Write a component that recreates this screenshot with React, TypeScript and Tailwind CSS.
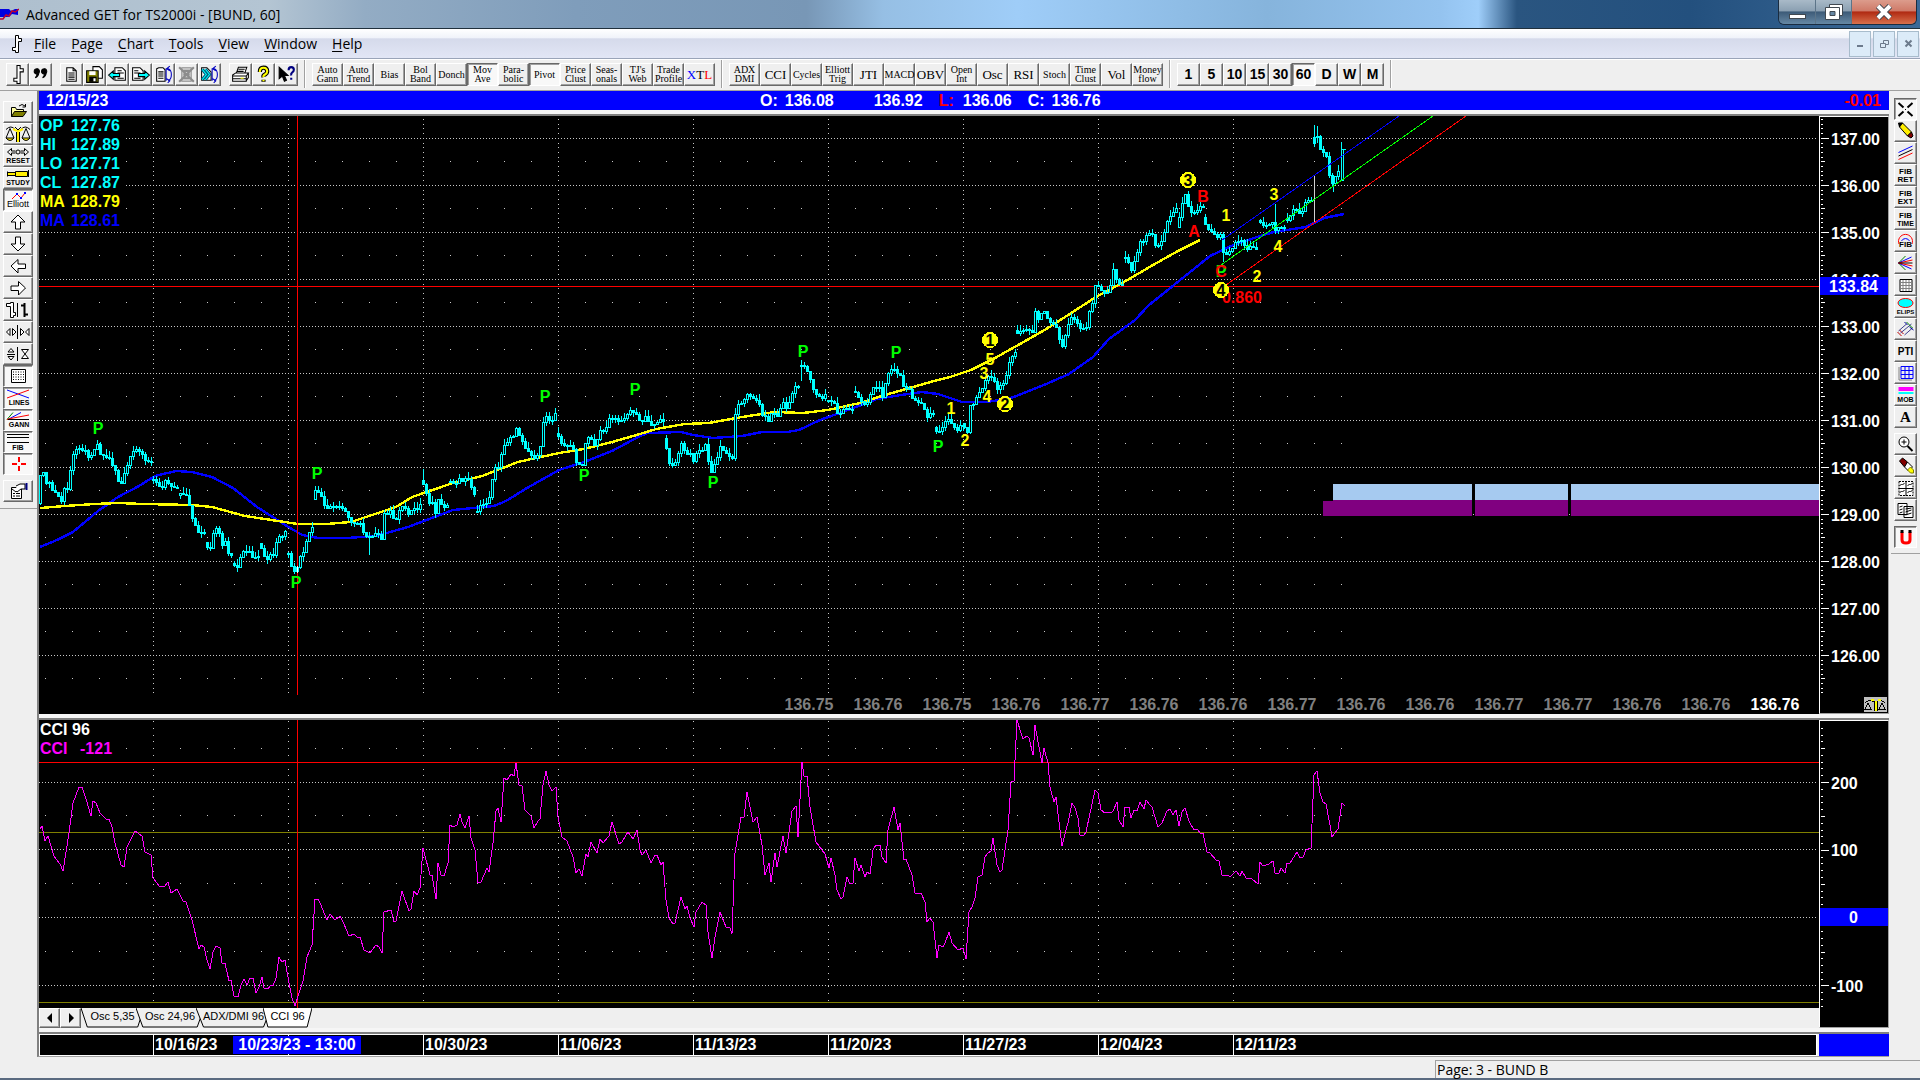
import React from "react";

type Point = [number, number];

const parsePoints = (raw: string): Point[] =>
  raw
    .trim()
    .split(/\s+/)
    .map((pair) => pair.split(",").map(Number) as Point);

// one string per session group, gaps are left between them
const priceSegments = [
  "40,503 42,477 45,473 48,483 52,480 55,492 58,495 63,501 66,487 70,487 73,465 76,450 82,446 86,450 91,460 95,450 99,442 102,456 112,457 116,468 120,482 124,483 127,467 133,456 137,448 144,452 146,462 151,462",
  "153,479 159,482 162,487 169,480 171,487 178,485",
  "180,495 188,495 192,507 195,520 199,533 205,531",
  "207,542 212,550 216,528 220,528 224,543 227,543 229,553 232,555",
  "234,563 240,565 244,552 252,550 256,560 259,557",
  "261,543 267,557 276,556 279,535 283,535 286,533",
  "288,553 291,555 294,572 298,567 301,560 305,553 309,537 313,525",
  "315,499 317,492 322,493 325,503 331,508 343,504 347,513 352,522 361,522 365,533 369,537 374,534 380,535 383,539 385,512 392,512 394,519 398,519 402,505 405,503 409,517 414,508 421,506",
  "423,480 428,493 430,502 434,500 437,515 440,500 445,507 448,503",
  "450,482 457,485 461,477 467,480 471,480 475,493",
  "477,511 484,505 490,502 493,483 495,470 501,467 504,447 509,440 515,437 518,428 524,439 527,450 536,457 542,448 544,427 547,415 552,420 556,415",
  "558,433 563,443 569,444 575,450 577,462 584,463 586,447 591,436 597,446 600,433 607,431 612,413 619,423 625,419 629,412 637,413 642,420 646,417 654,426 658,419 664,422",
  "666,438 671,462 677,464 683,443 687,451 691,453 695,462 699,450 707,446 710,462 713,472 718,457 722,448 728,453 735,457 736,420 740,405 745,402 748,390 752,398 760,400 764,413 770,422 774,410 780,415 785,403 789,409 793,392 798,387",
  "801,365 808,365 811,378 816,393 825,396",
  "828,400 836,402 841,417 846,408 852,408",
  "855,391 860,398 866,403 871,398 875,388 881,386 885,398 888,378 894,367 901,372 904,387 911,388 916,402 924,403 929,415 934,415",
  "936,427 939,433 943,426 950,420 958,428 963,427",
  "964,423 969,430 971,408 975,405 980,392 985,385 991,375 995,378 999,387 1004,387 1009,372 1012,355 1015,354",
  "1017,330 1022,333 1030,328 1034,330 1037,313 1041,322 1044,308 1048,312 1051,323 1058,327 1061,338 1065,346 1068,333 1072,317 1078,318 1082,330 1089,327 1092,302 1096,300 1097,287 1101,287 1105,293 1112,287 1115,270 1119,282 1123,283",
  "1125,257 1130,263 1133,270 1137,257 1141,243 1146,242 1149,232 1154,232 1157,247 1161,245 1165,237 1168,220 1173,217 1177,208",
  "1179,227 1182,210 1185,197 1189,195 1190,207 1194,214 1198,208 1203,208",
  "1205,217 1208,230 1212,230 1219,235 1222,236 1223,253 1228,254 1233,247 1239,242 1244,240 1248,247 1258,249",
  "1260,220 1264,227 1271,223 1274,220 1277,232 1281,227 1285,226",
  "1287,218 1292,217 1296,207 1301,212 1305,208 1308,202 1312,200",
  "1314,143 1317,133 1320,134 1321,150 1328,156 1330,170 1333,182 1337,178 1340,172",
].map(parsePoints);

const slowAverage =
  "40,508 65,506 94,504 118,503 143,504 192,505 212,507 245,516 278,521 298,524 327,524 351,522 363,518 396,507 412,497 453,483 482,476 518,462 559,453 584,449 612,442 640,434 656,429 685,424 709,423 742,417 775,412 803,413 828,410 860,403 885,395 934,381 950,377 971,370 995,358 1020,344 1048,328 1096,297 1124,282 1153,265 1178,251 1200,240";

const fastAverage =
  "40,547 57,540 73,532 98,511 118,497 139,486 155,476 176,471 192,472 212,477 233,488 257,507 282,523 302,535 318,538 347,538 376,536 408,527 453,510 494,506 506,501 527,488 559,470 584,462 612,451 640,436 648,433 681,432 693,435 713,438 742,436 762,432 787,432 799,430 820,420 848,410 877,399 901,395 922,392 938,394 962,402 987,402 1011,398 1044,385 1069,374 1093,357 1109,339 1135,320 1149,305 1174,285 1210,256 1231,246 1260,236 1274,232 1306,227 1324,218 1344,214";

const cciLine =
  "40,829 42,826 45,841 48,836 54,856 60,864 63,871 69,833 73,803 79,787 82,787 87,802 91,816 93,801 96,803 100,813 106,819 109,819 112,827 115,843 121,865 124,867 127,847 135,831 142,836 145,852 151,855 153,878 160,887 165,886 168,882 171,893 177,889 183,901 186,902 192,920 199,949 201,945 204,947 207,960 210,969 213,952 216,946 220,948 222,963 225,963 229,981 231,980 234,996 238,997 241,985 244,979 247,985 250,978 253,978 256,993 259,987 262,977 264,988 268,989 271,985 273,986 276,978 279,957 282,962 285,960 289,983 292,998 295,1006 300,990 303,981 307,957 312,945 315,899 318,899 321,905 324,913 327,920 330,914 335,920 340,916 344,924 349,936 354,934 358,938 360,937 364,950 370,953 376,945 379,947 382,953 384,912 391,910 394,922 396,921 402,891 409,911 411,909 414,891 417,895 420,888 423,848 430,875 432,875 436,899 438,863 441,875 444,876 448,863 450,825 453,827 457,825 460,814 462,822 465,828 469,816 471,838 475,850 478,883 481,882 487,868 489,872 493,843 496,811 498,808 501,822 504,778 507,780 511,774 514,776 516,763 519,785 522,786 525,810 531,816 534,828 538,821 540,819 543,785 546,771 549,785 552,791 556,787 558,817 562,837 567,841 573,857 576,873 579,869 582,876 586,854 588,857 591,842 597,853 600,839 603,843 609,836 612,822 619,844 622,842 628,832 633,839 637,830 640,850 642,855 646,850 651,863 655,855 657,855 661,865 663,862 666,900 669,918 673,924 675,923 681,897 685,909 687,906 690,918 694,927 696,912 702,902 706,905 708,932 712,958 715,937 720,912 726,927 730,928 732,934 735,853 741,817 744,817 747,792 753,822 757,817 762,845 765,875 769,863 771,882 775,853 777,867 783,836 786,853 792,811 796,806 798,837 802,762 804,776 807,776 810,807 816,842 825,854 829,868 831,858 835,875 837,890 841,899 843,897 847,877 850,884 853,883 855,858 859,871 861,865 865,877 867,872 870,874 873,850 876,845 880,845 882,857 886,863 888,830 894,807 898,830 900,823 904,860 906,859 912,875 915,893 921,893 925,902 927,922 930,918 933,922 937,958 939,945 943,947 945,943 949,932 952,943 958,950 963,948 966,959 969,912 972,907 975,898 978,877 982,875 985,857 988,853 991,851 993,838 997,865 1000,872 1002,870 1008,830 1011,782 1014,781 1017,720 1021,733 1023,739 1027,736 1029,738 1033,755 1035,725 1039,747 1042,763 1044,748 1048,763 1050,787 1054,802 1056,797 1060,830 1062,846 1066,830 1068,823 1072,803 1075,808 1078,818 1080,835 1084,835 1086,832 1095,790 1098,793 1101,810 1105,813 1107,812 1111,813 1113,811 1117,802 1119,820 1123,827 1125,807 1129,807 1131,818 1134,810 1137,811 1140,802 1144,809 1146,800 1150,805 1152,807 1158,827 1162,823 1167,811 1170,809 1173,815 1176,810 1179,826 1182,812 1185,808 1189,821 1194,830 1197,829 1201,834 1203,833 1207,852 1210,853 1216,860 1219,861 1222,875 1228,875 1230,877 1236,871 1240,876 1242,871 1246,878 1252,879 1258,884 1260,862 1263,866 1269,864 1273,861 1275,873 1279,873 1281,868 1285,873 1287,863 1290,863 1297,852 1300,858 1303,857 1306,850 1311,848 1314,775 1317,771 1320,793 1323,802 1326,804 1330,825 1332,837 1338,829 1342,803 1345,806";

const weekLines = [153, 288, 423, 558, 693, 828, 963, 1098, 1233];
const priceLevels = [137, 136, 135, 134, 133, 132, 131, 130, 129, 128, 127, 126];
const priceY = (price: number) => 138 + (137 - price) * 47;

const pivots: Point[] = [
  [98, 434], [296, 588], [317, 479], [545, 402], [635, 395], [584, 481],
  [713, 488], [803, 357], [896, 358], [938, 452],
];

const waves: { label: string; x: number; y: number; fill: string }[] = [
  { label: "1", x: 951, y: 414, fill: "#ffff00" },
  { label: "2", x: 965, y: 446, fill: "#ffff00" },
  { label: "3", x: 984, y: 379, fill: "#ffff00" },
  { label: "4", x: 987, y: 402, fill: "#ffff00" },
  { label: "5", x: 990, y: 365, fill: "#ffff00" },
  { label: "1", x: 1226, y: 221, fill: "#ffff00" },
  { label: "2", x: 1257, y: 282, fill: "#ffff00" },
  { label: "3", x: 1274, y: 200, fill: "#ffff00" },
  { label: "4", x: 1278, y: 252, fill: "#ffff00" },
  { label: "A", x: 1194, y: 237, fill: "#ff0000" },
  { label: "B", x: 1203, y: 202, fill: "#ff0000" },
];

const circledWaves = [
  { label: "1", x: 990, y: 340 },
  { label: "2", x: 1005, y: 404 },
  { label: "3", x: 1188, y: 180 },
  { label: "4", x: 1221, y: 290 },
];

const lastPrices = [
  "136.75", "136.76", "136.75", "136.76", "136.77", "136.76", "136.76", "136.77",
  "136.76", "136.76", "136.77", "136.77", "136.76", "136.76", "136.76",
];

const readout = [
  { label: "OP", value: "127.76", fill: "#00ffff" },
  { label: "HI", value: "127.89", fill: "#00ffff" },
  { label: "LO", value: "127.71", fill: "#00ffff" },
  { label: "CL", value: "127.87", fill: "#00ffff" },
  { label: "MA", value: "128.79", fill: "#ffff00" },
  { label: "MA", value: "128.61", fill: "#0000ff" },
];

const studiesA = [
  "Auto Gann", "Auto Trend", "Bias", "Bol Band", "Donch", "Mov Ave", "Para- bolic",
  "Pivot", "Price Clust", "Seas- onals", "TJ's Web", "Trade Profile", "XTL",
];
const studiesB = [
  "ADX DMI", "CCI", "Cycles", "Elliott Trig", "JTI", "MACD", "OBV", "Open Int",
  "Osc", "RSI", "Stoch", "Time Clust", "Vol", "Money flow",
];
const bigStudies = ["CCI", "JTI", "OBV", "Osc", "RSI", "Vol", "XTL"];
const timeframes = ["1", "5", "10", "15", "30", "60", "D", "W", "M"];
const menus = ["File", "Page", "Chart", "Tools", "View", "Window", "Help"];

const interpolate = (points: Point[], x: number) => {
  for (let i = 1; i < points.length; i++) {
    const [x0, y0] = points[i - 1];
    const [x1, y1] = points[i];
    if (x <= x1) return y0 + ((y1 - y0) * (x - x0)) / (x1 - x0);
  }
  return points[points.length - 1][1];
};

const jitter = (n: number, range: number) => (n * 37 + ((n * n) % 11) * 5) % range;

const Candles: React.FC = () => {
  const bodies: React.ReactNode[] = [];
  priceSegments.forEach((segment) => {
    const last = segment[segment.length - 1][0];
    let open = segment[0][1];
    for (let x = segment[0][0]; x <= last; x += 3) {
      const close = Math.round(interpolate(segment, x + 2) + jitter(x, 5) - 2);
      const top = Math.round(Math.min(open, close));
      const height = Math.max(1, Math.abs(Math.round(close - open)));
      bodies.push(
        <g key={x}>
          <path
            d={`M${x + 0.5} ${top - jitter(x, 7)}V${top}M${x + 0.5} ${top + height}V${top + height + jitter(x + 1, 6)}`}
          />
          <rect
            x={x - 0.5}
            y={top + 0.5}
            width={2}
            height={height}
            fill={close > open ? "#00ffff" : "#000000"}
          />
        </g>
      );
      open = close;
    }
  });
  return <g stroke="#00ffff">{bodies}</g>;
};

const gridDots = (ys: number[]) => {
  const dots: string[] = [];
  for (let x = 45; x <= 1341; x += 27) {
    if (weekLines.includes(x)) continue;
    ys.forEach((y) => dots.push(`M${x} ${y + 0.5}h1`));
  }
  return dots.join("");
};

const PriceChart: React.FC = () => (
  <svg className="block h-full w-full" shapeRendering="crispEdges" role="img" aria-label="BUND 60 minute price">
    <g transform="translate(-39 -116)" fill="none" className="font-bold" fontFamily="'Liberation Sans', Arial, sans-serif" fontSize="16">
      <g stroke="#c8c8c8">
        {priceLevels.map((p) => (
          <path key={p} d={`M39 ${priceY(p) + 0.5}H1817`} strokeDasharray="1 2" />
        ))}
        {weekLines.map((x) => (
          <path key={x} d={`M${x + 0.5} 119V694`} strokeDasharray="1 3.7" />
        ))}
        <path d={gridDots(priceLevels.map((p) => priceY(p) + 23))} />
      </g>
      <rect x={39} y={116} width={86} height={115} fill="#000000" />

      <path d="M39 286.5H1820" stroke="#ff0000" />
      <path d="M1333 484h139v16h-139zM1475 484h93v16h-93zM1571 484h700v16h-700z" fill="#a6caf0" />
      <path d="M1323 501h10v-1h139v16h-149zM1475 500h93v16h-93zM1571 500h700v16h-700z" fill="#800080" />

      <polyline points={fastAverage} stroke="#0000ff" strokeWidth={2.4} />
      <polyline points={slowAverage} stroke="#ffff00" strokeWidth={2.4} />
      <Candles />
      <g stroke="#00ffff">
        <path d="M369.5 537V555M423.5 469V480M801.5 361V381M1314.5 125V143M1317.5 126V143M1275.5 204V232M1223.5 250V262M1333.5 182V192M1341.5 142V180M1340 180.5h3M1343.5 149V181M1342 149.5h4" />
      </g>
      <path d="M1314.5 175V223" stroke="#d0d0d0" />
      <path d="M1222 240L1399 116" stroke="#0000ff" />
      <path d="M1221 265L1433 116" stroke="#00ff00" />
      <path d="M1226 285L1466 116" stroke="#ff0000" />
      <path d="M297.5 116V695" stroke="#ff0000" />
      <path d="M297.5 566V573" stroke="#ffffff" />

      <g textAnchor="middle">
        {pivots.map(([x, y]) => (
          <text key={x} x={x} y={y} fill="#00ff00">P</text>
        ))}
        <text x={1221} y={277} fill="#00ff00">P</text>
        <text x={1221} y={277} fill="#ff0000">C</text>
        <text x={1242} y={303} fill="#ff0000">0.860</text>
        {waves.map((w) => (
          <text key={`${w.label}-${w.x}`} x={w.x} y={w.y} fill={w.fill}>{w.label}</text>
        ))}
        {circledWaves.map((w) => (
          <g key={w.x}>
            <circle cx={w.x} cy={w.y} r={8} fill="#ffff00" />
            <text x={w.x} y={w.y + 6} fill="#000000">{w.label}</text>
          </g>
        ))}
        {lastPrices.map((p, i) => (
          <text key={i} x={809 + i * 69} y={710} fill={i === lastPrices.length - 1 ? "#ffffff" : "#808080"}>{p}</text>
        ))}
      </g>
      {readout.map((row, i) => (
        <g key={i} fill={row.fill}>
          <text x={40} y={131 + i * 19}>{row.label}</text>
          <text x={71} y={131 + i * 19}>{row.value}</text>
        </g>
      ))}
    </g>
  </svg>
);

const CciChart: React.FC = () => (
  <svg className="block h-full w-full" shapeRendering="crispEdges" role="img" aria-label="CCI 96">
    <g transform="translate(-39 -720)" fill="none" className="font-bold" fontFamily="'Liberation Sans', Arial, sans-serif" fontSize="16">
      <g stroke="#c8c8c8">
        {[782, 849, 917, 985].map((y) => (
          <path key={y} d={`M39 ${y + 0.5}H1817`} strokeDasharray="1 2" />
        ))}
        {weekLines.map((x) => (
          <path key={x} d={`M${x + 0.5} 721V1007`} strokeDasharray="1 5.8" />
        ))}
        <path d={gridDots([748, 815, 883, 951])} />
      </g>
      <rect x={39} y={720} width={86} height={36} fill="#000000" />
      <path d="M39 832.5H1820M39 1002.5H1820" stroke="#808000" />
      <path d="M39 762.5H1820M297.5 720V1008" stroke="#ff0000" />
      <polyline points={cciLine} stroke="#ff00ff" />
      <text x={40} y={735} fill="#ffffff">CCI 96</text>
      <text x={40} y={754} fill="#ff00ff">CCI</text>
      <text x={80} y={754} fill="#ff00ff">-121</text>
    </g>
  </svg>
);

const PriceAxis: React.FC = () => {
  const ticks: string[] = [];
  for (let i = 0; i <= 122; i++) {
    const y = Math.round(119 + i * 4.7);
    const step = (i + 6) % 10;
    ticks.push(`M1821 ${y + 0.5}h${step === 0 ? 8 : step === 5 ? 4 : 2}`);
  }
  return (
    <svg className="block h-full w-full" shapeRendering="crispEdges" role="img" aria-label="Price scale">
      <g transform="translate(-1820 -117)" className="font-bold" fontFamily="'Liberation Sans', Arial, sans-serif" fontSize="16" fill="#ffffff">
        <path d={ticks.join("")} stroke="#ffffff" />
        {priceLevels.map((p) => (
          <text key={p} x={1831} y={priceY(p) + 7}>{p.toFixed(2)}</text>
        ))}
        <rect x={1820} y={277} width={70} height={18} fill="#0000ff" />
        <text x={1829} y={292}>133.84</text>
        <g transform="translate(1864 697)">
          <rect width={23} height={15} fill="#c0c0c0" />
          <path d="M1 6q5-5 10 0q5-5 10 0M4 6l-3 6h6zM18 6l-3 6h6z" fill="none" stroke="#000000" />
          <path d="M10 4v10M13 4v10" fill="none" stroke="#000000" />
          <path d="M11.500 4v10M7 3h3M14 3h3" stroke="#ffff00" strokeWidth={2} />
        </g>
      </g>
    </svg>
  );
};

const CciAxis: React.FC = () => {
  const ticks: string[] = [];
  for (let i = 0; i <= 41; i++) {
    const y = Math.round(727.8 + i * 6.78);
    const step = (i + 2) % 10;
    ticks.push(`M1821 ${y + 0.5}h${step === 0 ? 8 : step === 5 ? 4 : 2}`);
  }
  return (
    <svg className="block h-full w-full" shapeRendering="crispEdges" role="img" aria-label="CCI scale">
      <g transform="translate(-1820 -721)" className="font-bold" fontFamily="'Liberation Sans', Arial, sans-serif" fontSize="16" fill="#ffffff">
        <path d={ticks.join("")} stroke="#ffffff" />
        <text x={1831} y={789}>200</text>
        <text x={1831} y={856}>100</text>
        <text x={1831} y={992}>-100</text>
        <rect x={1820} y={908} width={70} height={18} fill="#0000ff" />
        <text x={1849} y={923}>0</text>
      </g>
    </svg>
  );
};

const raised =
  "border border-t-white border-l-white border-r-[#696969] border-b-[#696969] bg-[#efefef] shadow-[inset_-1px_-1px_0_#a0a0a0]";
const pressed =
  "border border-t-[#696969] border-l-[#696969] border-r-white border-b-white bg-[#f8f8f8] shadow-[inset_1px_1px_0_#a0a0a0]";

type IconButtonProps = {
  label: string;
  size: string;
  box: string;
  active?: boolean;
  children: React.ReactNode;
};

const IconButton: React.FC<IconButtonProps> = ({ label, size, box, active, children }) => (
  <button type="button" aria-label={label} aria-pressed={!!active} className={`flex shrink-0 items-center justify-center ${size} ${active ? pressed : raised}`}>
    <svg viewBox={box} className="h-full w-full" fill="none" stroke="#000000" fontFamily="'Liberation Sans', Arial, sans-serif" fontSize="7" fontWeight="bold" textAnchor="middle">
      {children}
    </svg>
  </button>
);

const SmallLabel: React.FC<{ x: number; y: number; children: string; size?: number }> = ({ x, y, children, size = 7 }) => (
  <text x={x} y={y} fontSize={size} fill="#000000" stroke="none">{children}</text>
);

const fileIcons: { label: string; art: React.ReactNode }[] = [
  {
    label: "New page",
    art: <path d="M5.500 3.500h6l3 3v10h-9zM11.500 3.500v3h3M7 8.500h6M7 10.500h6M7 12.500h6M7 14.500h6" fill="#ffffff" />,
  },
  {
    label: "Save",
    art: (
      <>
        <path d="M8.500 2.500h6l3 3v8h-9z" fill="#ffffff" />
        <path d="M2.500 6.500h11v11h-11z" fill="#808000" />
        <path d="M5 12h7v5H5z" fill="#000000" stroke="none" />
        <path d="M5 7h6v3.500H5zM9 13.500h2v3H9z" fill="#ffffff" stroke="none" />
      </>
    ),
  },
  {
    label: "Previous page",
    art: (
      <>
        <path d="M7.500 3.500h7l3 3v9h-10zM10 6.500h4M10 8.500h6M10 13.500h6" fill="#ffffff" />
        <path d="M1.500 10.500l4.500-4v2.500h6v3H6v2.500z" fill="#00ffff" />
      </>
    ),
  },
  {
    label: "Next page",
    art: (
      <>
        <path d="M2.500 3.500h7l3 3v9h-10zM4 6.500h4M4 8.500h6M4 13.500h6" fill="#ffffff" />
        <path d="M18.500 10.500l-4.500-4v2.500H8v3h6v2.500z" fill="#00ffff" />
      </>
    ),
  },
  {
    label: "Reload page",
    art: (
      <>
        <path d="M3.500 4.500l2-1h4l2 2v11h-8zM5 7.500h5M5 9.500h5M5 11.500h5M5 13.500h5" fill="#ffffff" />
        <path d="M12.500 4v12M12.500 4.500h2q3 1 3 5.500t-3 6M16 2l-3 2.500 3 2M13 14l3 2-2 2" stroke="#0000c0" />
      </>
    ),
  },
  {
    label: "Delete page",
    art: (
      <>
        <path d="M5.500 3.500h9v13h-9z" fill="#d4d4d4" stroke="#909090" />
        <path d="M3 3l14 14M17 3L3 17M7 6.500h6M7 10h6M7 13.500h6" stroke="#8c8c8c" strokeWidth={2} />
      </>
    ),
  },
  {
    label: "Reload all",
    art: (
      <>
        <path d="M2.500 3.500h5l4 4v8h-9z" fill="#ffffff" />
        <path d="M3 5l4 5-4 5M6 5l4 5-4 5" stroke="#006080" strokeWidth={3} />
        <path d="M3 5l4 5-4 5M6 5l4 5-4 5" stroke="#00ffff" />
        <path d="M12.500 4v12M12.500 4.500h2q3 1 3 5.500t-3 6M16 2l-3 2.500 3 2M13 14l3 2-2 2" stroke="#0000c0" />
      </>
    ),
  },
];

const BarGlyph = () => (
  <path d="M9.500 1.500h3v3h3v3h-3v11h-3v-2h-3v-3h3z" fill="#ffffff" />
);

const Scales = () => (
  <>
    <path d="M2 5.500q5-5 9 0M26 5.500q-5-5-9 0M6 4.500L2 14M6 4.500L10 14M22 4.500L18 14M22 4.500L26 14" />
    <path d="M14 5v13M9 5l4 2M19 5l-4 2" stroke="#ffee00" strokeWidth={2} />
    <path d="M2 14h8q-4 5-8 0zM18 14h8q-4 5-8 0z" fill="#ffee00" />
    <path d="M12.500 8v10M15.500 8v10M11 3l3 3 3-3" />
  </>
);

const leftTools: { label: string; active?: boolean; art: React.ReactNode }[] = [
  {
    label: "Open",
    art: (
      <>
        <path d="M7.500 14.500v-9h4l1 2h7v3" fill="#ffffa0" />
        <path d="M7.500 14.500l3-5h12l-3.500 5z" fill="#808000" />
        <path d="M15 4q3-3 6 0M21.500 2v3h-3" />
      </>
    ),
  },
  { label: "Scale", art: <Scales /> },
  {
    label: "Reset",
    art: (
      <>
        <path d="M3.500 6l4-3.500V5h4M3.500 6l4 3.500V7h4M24.500 6l-4-3.500V5h-4M24.500 6l-4 3.500V7h-4" />
        <circle cx={14} cy={6} r={2} />
        <SmallLabel x={14} y={17}>RESET</SmallLabel>
      </>
    ),
  },
  {
    label: "Study",
    art: (
      <>
        <path d="M3.500 3.500v5M3.500 4.500h8v3h-8M11.500 3.500h12v5h-12zM24.500 2v7" fill="#ffee00" />
        <SmallLabel x={14} y={17}>STUDY</SmallLabel>
      </>
    ),
  },
  {
    label: "Elliott",
    active: true,
    art: (
      <>
        <path d="M8 9l5-5 4 4 4-5" stroke="#ff0000" />
        <path d="M12 4h2M16 8h2M20 3h2" stroke="#0000ff" strokeWidth={2} />
        <text x={14} y={17} fontSize={9} fontWeight="normal" fill="#000000" stroke="none">Elliott</text>
      </>
    ),
  },
  { label: "Up", art: <path d="M14 3l7 7h-4.500v7h-5v-7H7z" fill="#ffffff" /> },
  { label: "Down", art: <path d="M14 17l7-7h-4.500V3h-5v7H7z" fill="#ffffff" /> },
  { label: "Left", art: <path d="M7 10l7-6.500V8h7.500v4.500H14V17z" fill="#ffffff" /> },
  { label: "Right", art: <path d="M21.500 10l-7-6.500V8H7v4.500h7.500V17z" fill="#ffffff" /> },
  {
    label: "Bar style",
    art: (
      <>
        <path d="M2.500 3.500h4v-1h3v10h2v3h-2v2h-3v-11h-4z" fill="#ffffff" />
        <path d="M13.500 3v14" />
        <path d="M20.500 3v14M17 5.500h3.500M20.500 14.500H24" strokeWidth={2} />
      </>
    ),
  },
  {
    label: "Bar spacing",
    art: <path d="M6 6.500v7L2.500 10zM8.500 6.500v7L12 10zM13.500 3v14M16.500 6.500v7L20 10zM25 6.500v7L21.500 10z" fill="#ffffff" />,
  },
  {
    label: "Vertical scale",
    art: <path d="M4 8h6L7 4.500zM4 12.500h6L7 16zM3 10.500h8M13.500 3v14M17.500 5.500h7L21 10zM17.500 14.500h7L21 10z" fill="#ffffff" />,
  },
  {
    label: "Grid",
    active: true,
    art: (
      <>
        <path d="M7.500 3.500h14v13h-14z" fill="#ffffff" />
        <path d="M9 6h12M9 8.500h12M9 11h12M9 13.500h12" strokeDasharray="1 1.500" />
      </>
    ),
  },
  {
    label: "Lines",
    active: true,
    art: (
      <>
        <path d="M3 2l22 8" stroke="#0000ff" />
        <path d="M3 10l22-8" stroke="#ff0000" />
        <SmallLabel x={15} y={17}>LINES</SmallLabel>
      </>
    ),
  },
  {
    label: "Gann",
    active: true,
    art: (
      <>
        <path d="M3 9.500l6-7" stroke="#008000" />
        <path d="M4 9.500l13-7" stroke="#0000ff" />
        <path d="M4 9l21-4M3 9.500h8" stroke="#ff0000" />
        <path d="M4 9.500h21" />
        <SmallLabel x={15} y={17}>GANN</SmallLabel>
      </>
    ),
  },
  {
    label: "Fib",
    active: true,
    art: (
      <>
        <path d="M3 2.500h22M3 5.500h22M3 10.500h22" />
        <SmallLabel x={14} y={18}>FIB</SmallLabel>
      </>
    ),
  },
  {
    label: "Crosshair",
    active: true,
    art: <path d="M8 10h5M17 10h5M15 3v5M15 12v5" stroke="#ff0000" strokeWidth={2} />,
  },
  {
    label: "Properties",
    art: (
      <>
        <path d="M7.500 6.500h10v11h-10z" fill="#ffffff" />
        <path d="M9 12.500h2M12 12.500h4M9 15h2M12 15h4M8 8l4 3 5-5" />
        <path d="M12 5l4-2h5v5h-4l-4 3" fill="#ffffff" />
        <path d="M22.500 2v7" stroke="#000080" strokeWidth={2} />
      </>
    ),
  },
];

const twoLines = (a: string, b: string) => (
  <>
    <SmallLabel x={10} y={9} size={8}>{a}</SmallLabel>
    <SmallLabel x={10} y={17} size={b.length > 3 ? 7 : 8}>{b}</SmallLabel>
  </>
);

const rightTools: { label: string; active?: boolean; gap?: boolean; art: React.ReactNode }[] = [
  {
    label: "Pointer",
    active: true,
    art: (
      <>
        <path d="M3 4l5 4.500M17 4l-5 4.500M3 17l5-4.500M17 17l-5-4.500" strokeWidth={2} />
        <path d="M9.500 10.500h1" />
      </>
    ),
  },
  {
    label: "Pencil",
    art: (
      <>
        <path d="M4 3l3-1 9 9-4 4-8-9z" fill="#ffee00" />
        <path d="M3 2l4 0-3 4z" fill="#000000" />
        <path d="M12 15l4-4 1.500 4-2 2z" fill="#800000" />
      </>
    ),
  },
  {
    label: "Parallel lines",
    art: (
      <>
        <path d="M3 9.500L17 3" stroke="#0000ff" />
        <path d="M3 13L17 6.500" />
        <path d="M3 16.500L17 10" stroke="#ff0000" />
      </>
    ),
  },
  { label: "Fib retracement", art: twoLines("FIB", "RET") },
  { label: "Fib extension", art: twoLines("FIB", "EXT") },
  { label: "Fib time", art: twoLines("FIB", "TIME") },
  {
    label: "Fib arc",
    art: (
      <>
        <path d="M3.500 13a7 7 0 1 1 13 0" stroke="#ff0000" />
        <path d="M6 10a4.500 4.500 0 0 1 8 0" stroke="#0000ff" />
        <SmallLabel x={10} y={16} size={8}>FIB</SmallLabel>
      </>
    ),
  },
  {
    label: "Gann fan",
    art: (
      <>
        <path d="M3 10l7-7M3 10l7 7" stroke="#008000" />
        <path d="M3 10l13-6M3 10l13 6" stroke="#0000ff" />
        <path d="M3 10l14-3M3 10l14 3" stroke="#ff0000" />
        <path d="M3 10h14" />
      </>
    ),
  },
  {
    label: "Grid box",
    art: (
      <>
        <path d="M4.500 4.500h12v12h-12z" fill="#ffffff" />
        <path d="M7.500 5v11M10.500 5v11M13.500 5v11M5 7.500h11M5 10.500h11M5 13.500h11" stroke="#808080" />
      </>
    ),
  },
  {
    label: "Ellipse",
    art: (
      <>
        <ellipse cx={10} cy={6} rx={7.5} ry={4.5} fill="#00ffff" stroke="#ff0000" />
        <SmallLabel x={10} y={17} size={6}>ELIPS</SmallLabel>
      </>
    ),
  },
  {
    label: "Pitchfork",
    art: (
      <>
        <path d="M2 13l4 4M4 11l4 4" stroke="#c00000" />
        <path d="M5 14L16 5M3 12l8-7M9 16l8-7" stroke="#404090" />
        <path d="M9 3l3 3M14 8l4 3" stroke="#0000a0" />
        <path d="M11 3l6 6" stroke="#008000" />
      </>
    ),
  },
  {
    label: "PTI",
    art: <SmallLabel x={10} y={14} size={10}>PTI</SmallLabel>,
  },
  {
    label: "Square grid",
    art: (
      <>
        <path d="M3.500 4v13h13" stroke="#808080" />
        <path d="M5.500 3.500h12v12h-12zM9.500 3.500v12M13.500 3.500v12M5.500 7.500h12M5.500 11.500h12" stroke="#0000ff" />
      </>
    ),
  },
  {
    label: "Make or break",
    art: (
      <>
        <path d="M3 4h15" stroke="#ff00ff" strokeWidth={4} />
        <path d="M3 8h15" stroke="#00ffff" strokeWidth={2} />
        <SmallLabel x={10} y={17} size={7}>MOB</SmallLabel>
      </>
    ),
  },
  {
    label: "Text",
    art: <text x={10} y={15} fontSize={15} fontFamily="'Liberation Serif', serif" fill="#000000" stroke="none">A</text>,
  },
  {
    label: "Zoom",
    gap: true,
    art: (
      <>
        <circle cx={8.5} cy={8} r={5} fill="#ffffff" />
        <path d="M6 8h5M8.500 5.500v5" />
        <path d="M12 12l5 5" strokeWidth={2} />
      </>
    ),
  },
  {
    label: "Eraser",
    art: (
      <>
        <path d="M4 5l3-3 5 4-3 5z" fill="#800000" />
        <path d="M9 11l3-5 5 5-4 4z" fill="#ffffff" />
        <path d="M12 14l3-3 3 3v3h-3z" fill="#ffff00" stroke="#808000" />
      </>
    ),
  },
  {
    label: "Tile",
    art: (
      <>
        <path d="M3.500 3.500h14v14h-14z" fill="#ffffff" strokeDasharray="2 1" />
        <path d="M3 10.500h15M10.500 3v15M4 8l2-2 1 1 2-2M12 8l2-2 1 1 2-2M4 15l2-2 1 1 2-2M12 15l2-2 1 1 2-2" />
      </>
    ),
  },
  {
    label: "Copy",
    art: <path d="M2.500 3.500h9v11h-9zM8.500 6.500h9v11h-9zM4 7l3-1M4 10l3-1M4 13l3-1M10 9l6-1M10 12l6-2M10 15l6-2" fill="#ffffff" />,
  },
  {
    label: "Snap",
    gap: true,
    active: true,
    art: (
      <>
        <path d="M6.500 5v8q0 3 4 3t4-3V5" stroke="#ff0000" strokeWidth={3} />
        <path d="M5 4.500h3M13 4.500h3" strokeWidth={3} />
      </>
    ),
  },
];

const StudyButton: React.FC<{ name: string }> = ({ name }) => {
  const active = name === "Mov Ave" || name === "Pivot";
  const big = bigStudies.includes(name);
  return (
    <button
      type="button"
      className={`flex h-[23px] w-[31px] flex-col items-center justify-center font-['Liberation_Serif',serif] leading-[9px] text-black ${
        big ? "text-[13px]" : "text-[10px]"
      } ${active ? pressed : raised}`}
    >
      {name === "XTL" ? (
        <span>
          <span className="text-[#0000ff]">X</span>T<span className="text-[#ff0000]">L</span>
        </span>
      ) : (
        name.split(" ").map((line) => <span key={line} className="whitespace-nowrap">{line}</span>)
      )}
    </button>
  );
};

const Separator = () => <div className="mx-[6px] w-[2px] self-stretch border-l border-[#a0a0a0] bg-white" />;

const TitleBar: React.FC = () => (
  <header className="flex h-[29px] shrink-0 items-start border-b border-[#20303c] bg-[linear-gradient(90deg,#aebfce_0%,#b4c5d3_14%,#93acc4_19%,#7f9dbb_30%,#7897b6_42%,#96bfe4_46%,#9fcdf8_53%,#86b4dc_66%,#94c3ef_75%,#9fcefa_77%,#2a5580_79%,#23507e_88%,#3c6a98_100%)]">
    <div className="flex h-7 flex-1 items-center gap-[7px]">
      <svg width="19" height="14" viewBox="0 0 19 14">
        <path d="M0 2h9l2 2 4-2h3v6l-6-1-3 3H0z" fill="#0000e0" />
        <path d="M0 12h3l3-4 3 1 3-5 3 1 4-3" fill="none" stroke="#c00030" strokeWidth="1.500" />
      </svg>
      <h1 className="text-[14px] text-black">Advanced GET for TS2000i - [BUND, 60]</h1>
    </div>
    <div className="mr-[3px] flex h-[25px] overflow-hidden rounded-b-md border border-t-0 border-[#1a2c40]">
      <button type="button" aria-label="Minimize" className="flex w-[37px] items-center justify-center border-r border-[#5c7488] bg-[linear-gradient(#a9bac8_0%,#8ba0b2_45%,#3d5b78_50%,#6688a4_100%)]">
        <span className="mt-[9px] h-[5px] w-[17px] border border-[#404850] bg-white" />
      </button>
      <button type="button" aria-label="Restore" className="flex w-9 items-center justify-center border-r border-[#5c7488] bg-[linear-gradient(#a9bac8_0%,#8ba0b2_45%,#3d5b78_50%,#6688a4_100%)]">
        <svg width="20" height="18" viewBox="0 0 20 18">
          <path d="M5.500 1.500h13v11h-13z" fill="#ffffff" stroke="#404850" />
          <path d="M1.500 4.500h14v12h-14z" fill="#ffffff" stroke="#404850" />
          <path d="M6 8.500h5v4H6z" fill="#6688a4" stroke="#404850" />
        </svg>
      </button>
      <button type="button" aria-label="Close" className="flex w-16 items-center justify-center bg-[linear-gradient(#dc9c8c_0%,#cf7a68_45%,#b02a12_50%,#d8704c_100%)]">
        <svg width="18" height="16" viewBox="0 0 18 16">
          <path d="M3 2l12 12M15 2L3 14" stroke="#404850" strokeWidth="6" />
          <path d="M3 2l12 12M15 2L3 14" stroke="#ffffff" strokeWidth="4" />
        </svg>
      </button>
    </div>
  </header>
);

const MenuBar: React.FC = () => (
  <nav className="flex h-[30px] shrink-0 items-center border-b border-[#9aa4b8] bg-[linear-gradient(#ffffff_0%,#f0f3fa_30%,#d5daeb_34%,#e2e6f5_100%)] pl-2">
    <svg width="18" height="20" viewBox="2 0 18 20" fill="none" stroke="#000000">
      <BarGlyph />
    </svg>
    <ul className="ml-2 flex flex-1 gap-[15px] pb-[2px]">
      {menus.map((name) => (
        <li key={name}>
          <button type="button" className="text-[14px] text-black">
            <span className="underline underline-offset-2">{name[0]}</span>
            {name.slice(1)}
          </button>
        </li>
      ))}
    </ul>
    <div className="mr-px flex gap-[2px] text-[#6c7a8c]">
      {["Minimize window", "Restore window", "Close window"].map((label, i) => (
        <button key={label} type="button" aria-label={label} className="flex h-[26px] w-[22px] items-center justify-center border border-[#a8bccc] bg-[#dcebf8]">
          <svg width="9" height="9" viewBox="0 0 9 9" fill="none" stroke="currentColor" strokeWidth="2">
            {i === 0 && <path d="M1 7h6" />}
            {i === 1 && <path d="M3.500 4V1.500h5v4H6M.5 4.500h5v4h-5z" strokeWidth="1" />}
            {i === 2 && <path d="M1.500 1.500l6 6M7.500 1.500l-6 6" />}
          </svg>
        </button>
      ))}
    </div>
  </nav>
);

const Toolbar: React.FC = () => (
  <div className="flex h-8 shrink-0 items-center border-t border-b border-t-white border-b-[#a0a0a0] bg-[#efefef] pb-[2px] pl-[6px]">
    <div className="flex">
      <IconButton label="Bar chart" size="h-[23px] w-[23px]" box="0 0 20 20"><BarGlyph /></IconButton>
      <IconButton label="Quotes" size="h-[23px] w-[23px]" box="0 0 20 20">
        <path d="M4 7a2.500 2.500 0 1 1 4.500 1.500Q8 12 5 13q2-2 1.500-3.500A2.500 2.500 0 0 1 4 7zM11 7a2.500 2.500 0 1 1 4.500 1.500Q15 12 12 13q2-2 1.500-3.500A2.500 2.500 0 0 1 11 7z" fill="#000000" />
      </IconButton>
    </div>
    <div className="ml-[8px] flex">
      {fileIcons.map((icon) => (
        <IconButton key={icon.label} label={icon.label} size="h-[23px] w-[23px]" box="0 0 20 20">{icon.art}</IconButton>
      ))}
    </div>
    <div className="ml-[8px] flex">
      <IconButton label="Print" size="h-[23px] w-[23px]" box="0 0 20 20">
        <path d="M6 9l2-6h8l-2 6M8 5h6M7 7h6" fill="#ffffff" />
        <path d="M2.500 10.500l3-2h12l-2 3v5h-13zM2.500 11.500h13M15.500 16l2-3V8.500M3 14h12" fill="#ffffff" />
        <path d="M10 13.500h3" stroke="#ffff00" />
      </IconButton>
      <IconButton label="Help topics" size="h-[23px] w-[23px]" box="0 0 20 20">
        <path d="M6.500 7.500q0-4 3.500-4t3.500 3.500q0 2-2 3t-1.500 2.500M10 15v2" stroke="#000000" strokeWidth={4} />
        <path d="M6.500 7.500q0-4 3.500-4t3.500 3.500q0 2-2 3t-1.500 2.500M10 15v1.500" stroke="#ffff00" strokeWidth={2} />
      </IconButton>
      <IconButton label="What's this" size="h-[23px] w-[23px]" box="0 0 20 20">
        <path d="M3 3v11l3-2.500 2 5 2-1-2-4.500h3.500z" fill="#000000" />
        <path d="M12 6q0-3 2.500-3T17 5.500q0 1.500-1.500 2.500T14.500 11M14.500 13v2" stroke="#000080" strokeWidth={2} />
      </IconButton>
    </div>
    <Separator />
    <div className="flex">
      {studiesA.map((name) => <StudyButton key={name} name={name} />)}
    </div>
    <Separator />
    <div className="flex">
      {studiesB.map((name) => <StudyButton key={name} name={name} />)}
    </div>
    <Separator />
    <div className="flex">
      {timeframes.map((name) => (
        <button key={name} type="button" className={`h-[23px] w-[23px] text-center font-['Liberation_Sans',sans-serif] text-[14px] leading-5 font-bold text-black ${name === "60" ? pressed : raised}`}>
          {name}
        </button>
      ))}
    </div>
    <Separator />
  </div>
);

const StudyTab: React.FC<{ name: string; width: string; active?: boolean }> = ({ name, width, active }) => (
  <button type="button" role="tab" aria-selected={!!active} className={`relative -ml-2 flex h-5 items-start justify-center text-[11px] leading-4 text-black ${width}`}>
    <svg className="absolute inset-0 h-full w-full" viewBox="0 0 60 20" preserveAspectRatio="none">
      <path d="M0 0L6 19H54L60 0" fill={active ? "#ffffff" : "#efefef"} stroke="#000000" vectorEffect="non-scaling-stroke" />
    </svg>
    <span className="relative whitespace-nowrap">{name}</span>
  </button>
);

const Divider = () => (
  <div className="h-[6px] shrink-0 border-b-2 border-[#808080] bg-[#f6f6f6]" />
);

const DateAxis: React.FC = () => {
  const weeks = ["10/16/23", "", "10/30/23", "11/06/23", "11/13/23", "11/20/23", "11/27/23", "12/04/23", "12/11/23"];
  return (
    <div className="flex h-[22px] shrink-0 text-[16px] leading-[19px] font-bold text-white">
      <div className="relative flex flex-1 overflow-hidden border border-white bg-black">
        <div className="w-[113px] shrink-0" />
        {weeks.map((week, i) => (
          <div key={i} className="w-[135px] shrink-0 border-l border-white pl-px">{week}</div>
        ))}
        <div className="absolute top-px left-[193px] h-[18px] w-32 bg-[#0000ff] text-center leading-[18px]">
          10/23/23 - 13:00
        </div>
      </div>
      <div className="ml-[2px] w-[70px] bg-[#0000ff]" />
    </div>
  );
};

export default function App() {
  return (
    <div className="flex h-screen flex-col overflow-hidden bg-[#efefef] font-['Open_Sans','Noto_Sans',sans-serif]">
      <TitleBar />
      <MenuBar />
      <Toolbar />
      <main className="flex min-h-0 flex-1">
        <aside className="flex w-[37px] shrink-0 flex-col self-start border-b border-[#a0a0a0] pt-[10px] pb-[6px] pl-[3px]">
          {leftTools.map((tool) => (
            <React.Fragment key={tool.label}>
              {tool.label === "Properties" && <div className="h-[5px]" />}
              <IconButton label={tool.label} active={tool.active} size="h-[22px] w-[30px]" box="0 0 28 20">{tool.art}</IconButton>
            </React.Fragment>
          ))}
        </aside>

        <section className="flex min-w-0 flex-1 flex-col border-b border-l-2 border-b-[#a0a0a0] border-l-[#808080] font-['Liberation_Sans',Arial,sans-serif]">
          <div className="flex h-[19px] shrink-0 bg-[#0000ff] pr-2 pl-[7px] text-[16px] leading-[19px] font-bold text-white">
            <span className="w-[714px]">12/15/23</span>
            <span className="flex gap-[7px]"><span>O:</span>136.08</span>
            <span className="ml-10">136.92</span>
            <span className="ml-4 text-[#ff0000]">L:</span>
            <span className="ml-[9px]">136.06</span>
            <span className="ml-4 flex gap-[7px]"><span>C:</span>136.76</span>
            <span className="ml-auto text-[#ff0000]">-0.01</span>
          </div>
          <Divider />
          <div className="flex min-h-0 flex-1 bg-black">
            <div className="min-w-0 flex-1"><PriceChart /></div>
            <div className="w-[70px] overflow-hidden border border-t-white border-r-[#a0a0a0] border-b-[#a0a0a0] border-l-white"><PriceAxis /></div>
          </div>
          <Divider />
          <div className="flex shrink-0">
            <div className="flex min-w-0 flex-1 flex-col">
              <div className="h-72 bg-black"><CciChart /></div>
              <div className="flex h-5 bg-[#efefef]" role="tablist">
                <button type="button" aria-label="Scroll left" className={`flex w-[21px] items-center justify-center ${raised}`}>
                  <svg width="6" height="10"><path d="M5 0v10L0 5z" /></svg>
                </button>
                <button type="button" aria-label="Scroll right" className={`mr-2 flex w-[21px] items-center justify-center ${raised}`}>
                  <svg width="6" height="10"><path d="M1 0v10l5-5z" /></svg>
                </button>
                <StudyTab name="Osc 5,35" width="w-[63px]" />
                <StudyTab name="Osc 24,96" width="w-[68px]" />
                <StudyTab name="ADX/DMI 96" width="w-[75px]" />
                <StudyTab name="CCI 96" width="w-[49px]" active />
              </div>
            </div>
            <div className="w-[70px] border border-t-white border-r-[#a0a0a0] border-b-[#a0a0a0] border-l-white bg-black"><CciAxis /></div>
          </div>
          <Divider />
          <DateAxis />
        </section>

        <aside className="ml-[2px] flex w-[29px] shrink-0 flex-col self-start border-b border-[#a0a0a0] pt-[7px] pb-[5px] pl-[3px]">
          {rightTools.map((tool) => (
            <React.Fragment key={tool.label}>
              {tool.gap && <div className="h-[5px]" />}
              <IconButton label={tool.label} active={tool.active} size="h-[22px] w-[23px]" box="0 0 20 20">{tool.art}</IconButton>
            </React.Fragment>
          ))}
        </aside>
      </main>
      <footer className="flex h-[23px] shrink-0 border-b-2 border-[#5a6a80] pt-[3px]">
        <div className="ml-auto w-[485px] border-t border-l border-[#a0a0a0] pl-px text-[14px] leading-[18px] text-black">
          Page: 3 - BUND B
        </div>
      </footer>
    </div>
  );
}
